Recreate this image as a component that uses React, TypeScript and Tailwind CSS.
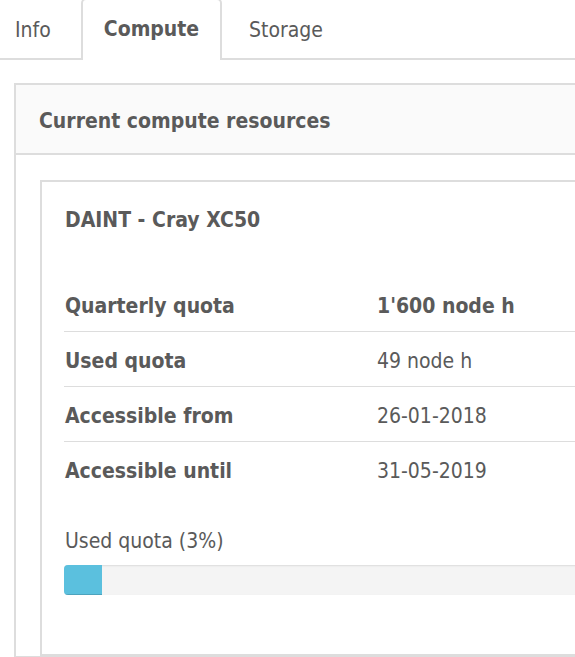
import React from "react";

const rows = [
  { label: "Quarterly quota", value: "1'600 node h", strong: true },
  { label: "Used quota", value: "49 node h" },
  { label: "Accessible from", value: "26-01-2018" },
  { label: "Accessible until", value: "31-05-2019" },
];

export default function App() {
  return (
    <div className="w-[575px] h-[657px] overflow-hidden bg-white text-[#5a5a5a] font-['DejaVu_Sans_Condensed','DejaVu_Sans',sans-serif] [font-stretch:condensed] text-[21px]">
      {/* Tabs */}
      <div className="flex items-end h-[60px] border-b-2 border-[#ddd] w-[900px]">
        <div className="h-full flex items-center pl-[15px] w-[79px] mb-[-2px]">Info</div>
        <div className="h-[62px] ml-[2px] w-[141px] flex items-center justify-center font-bold border-2 border-b-0 border-[#ddd] rounded-t-[5px] bg-white mb-[-2px]">
          Compute
        </div>
        <div className="h-full flex items-center pl-[27px] pr-[25px] mb-[-2px]">Storage</div>
      </div>

      {/* Panel */}
      <div className="mt-[23px] ml-[14px] w-[900px] border-2 border-[#ddd]">
        <div className="h-[70px] flex items-center pl-[23px] pt-[5px] bg-[#fafafa] border-b-2 border-[#ddd] font-bold">
          Current compute resources
        </div>
        <div className="pt-[25px] pl-[24px]">
          <div className="border-2 border-[#ddd] h-[476px] pl-[23px] pr-[24px]">
            <div className="pt-[24px] font-bold leading-[28px]">DAINT - Cray XC50</div>

            <div className="mt-[43px]">
              {rows.map((r, i) => (
                <div
                  key={r.label}
                  className={`flex items-center h-[55px] pt-[5px] ${i < rows.length - 1 ? "border-b border-[#ddd]" : ""} ml-[-1px]`}
                >
                  <div className="w-[313px] pl-[1px] font-bold">{r.label}</div>
                  <div className={r.strong ? "font-bold" : ""}>{r.value}</div>
                </div>
              ))}
            </div>

            <div className="mt-[32px] leading-[24px]">Used quota (3%)</div>
            <div className="mt-[12px] ml-[-1px] h-[30px] rounded-[4px] bg-[#f4f4f4] shadow-[inset_0_1px_2px_rgba(0,0,0,0.1)] overflow-hidden">
              <div className="h-full w-[38px] bg-[#5bc0de] shadow-[inset_0_-1px_0_rgba(0,0,0,0.15)]" />
            </div>
          </div>
        </div>
      </div>
    </div>
  );
}
